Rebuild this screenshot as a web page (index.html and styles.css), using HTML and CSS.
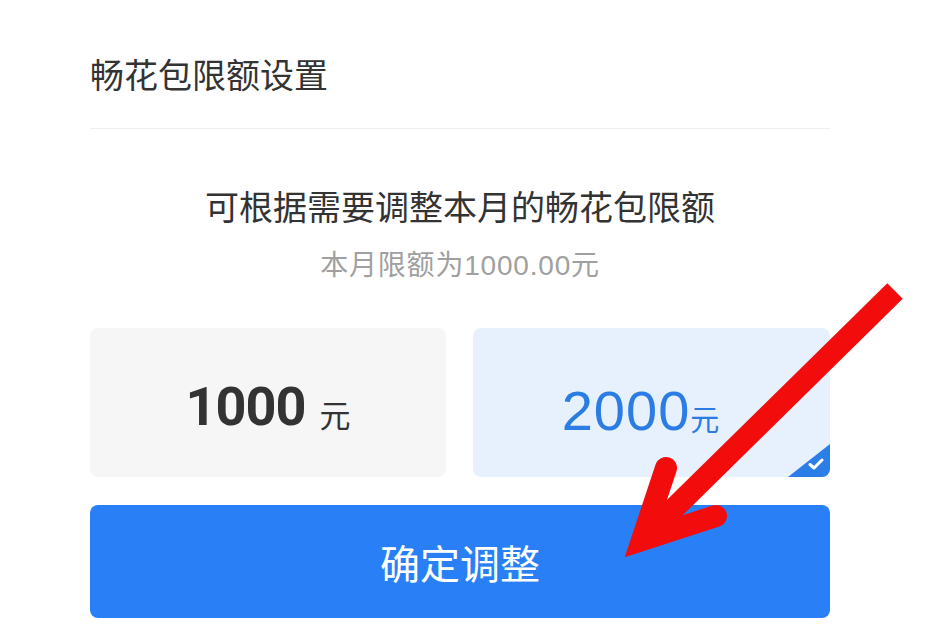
FILE: index.html
```html
<!DOCTYPE html>
<html lang="zh-CN">
  <head>
    <meta charset="UTF-8" />
    <meta name="viewport" content="width=device-width, initial-scale=1.0" />
    <title>畅花包限额设置</title>
    <link rel="stylesheet" href="styles.css">
  </head>

  <body>
    <div class="panel">
      <h1 class="panel__title">畅花包限额设置</h1>

      <!-- 说明 -->
      <div class="intro">
        <p class="intro__main">可根据需要调整本月的畅花包限额</p>
        <p class="intro__sub">本月限额为1000.00元</p>
      </div>

      <!-- 额度选项 -->
      <div class="options">
        <div class="option">
          <span class="option__num option__num--bold">1000</span>
          <span class="option__unit option__unit--gap">元</span>
        </div>
        <div class="option option--active">
          <span class="option__num">2000</span>
          <span class="option__unit">元</span>
          <span class="option__check">
            <svg width="16" height="12" viewBox="0 0 16 12">
              <path d="M2 6.5 L6 10 L14 2" fill="none" stroke="#fff" stroke-width="3" stroke-linecap="round" stroke-linejoin="round" />
            </svg>
          </span>
        </div>
      </div>

      <button class="submit">确定调整</button>
    </div>

    <!-- 红色箭头标注 -->
    <svg class="arrow" width="938" height="638" viewBox="0 0 938 638">
      <path d="M895 291 L652 530" fill="none" stroke="#f20c0c" stroke-width="22" stroke-linecap="butt" />
      <path d="M666 468 L642 540 L716 516" fill="none" stroke="#f20c0c" stroke-width="22" stroke-linecap="round" stroke-linejoin="miter" />
    </svg>
  </body>
</html>
```

FILE: styles.css
```css
/* 样式 */
body {
  font-family: "Noto Sans CJK SC", "Noto Sans", sans-serif;
  margin: 0;
  padding: 0;
  background: #fff;
  color: #333;
}

.panel {
  width: 740px;
  margin-left: 90px;
  padding-top: 56px;
}

.panel__title {
  margin: 0;
  font-size: 34px;
  line-height: 36px;
  font-weight: normal;
  color: #333;
  padding-bottom: 36px;
  border-bottom: 1px solid #eeeeee;
}

.intro {
  text-align: center;
  padding-top: 59px;
}

.intro p {
  margin: 0;
}

.intro__main {
  font-size: 34px;
  line-height: 36px;
  color: #333;
}

.intro__sub {
  margin-top: 28px !important;
  font-family: "Liberation Sans", "Noto Sans CJK SC", sans-serif;
  font-size: 28px;
  line-height: 28px;
  letter-spacing: 0.8px;
  color: #a0a0a0;
}

.options {
  display: grid;
  grid-template-columns: 356px 357px;
  gap: 27px;
  margin-top: 48px;
}

.option {
  position: relative;
  overflow: hidden;
  height: 149px;
  box-sizing: border-box;
  padding-top: 8px;
  border-radius: 8px;
  background: #f6f6f6;
  display: flex;
  align-items: center;
  justify-content: center;
  color: #333;
}

.option__num {
  font-family: "Liberation Sans", Arial, sans-serif;
  font-size: 56px;
  line-height: 1;
  letter-spacing: 1px;
}

.option__num--bold {
  font-family: Roboto, sans-serif;
  font-weight: bold;
  font-size: 54px;
  letter-spacing: -1px;
}

.option__unit {
  font-size: 29px;
  line-height: 1;
  margin-top: 16px;
}

.option__unit--gap {
  margin-left: 14px;
  margin-top: 14px;
  font-size: 31px;
}

.option--active {
  background: #e7f1fd;
  color: #2b7de3;
  padding-top: 16px;
  padding-right: 22px;
}

.option__check {
  position: absolute;
  right: 0;
  bottom: 0;
  width: 42px;
  height: 33px;
  background: #2b7de8;
  clip-path: polygon(100% 0, 100% 100%, 0 100%);
  display: flex;
  align-items: flex-end;
  justify-content: flex-end;
  padding: 0 6px 7px 0;
  box-sizing: border-box;
}

.submit {
  display: block;
  width: 100%;
  height: 113px;
  margin-top: 28px;
  border: none;
  border-radius: 8px;
  background: #2980f6;
  color: #fff;
  font-family: "Noto Sans CJK SC", sans-serif;
  font-size: 40px;
  cursor: pointer;
}

.arrow {
  position: absolute;
  left: 0;
  top: 0;
  pointer-events: none;
}
```
